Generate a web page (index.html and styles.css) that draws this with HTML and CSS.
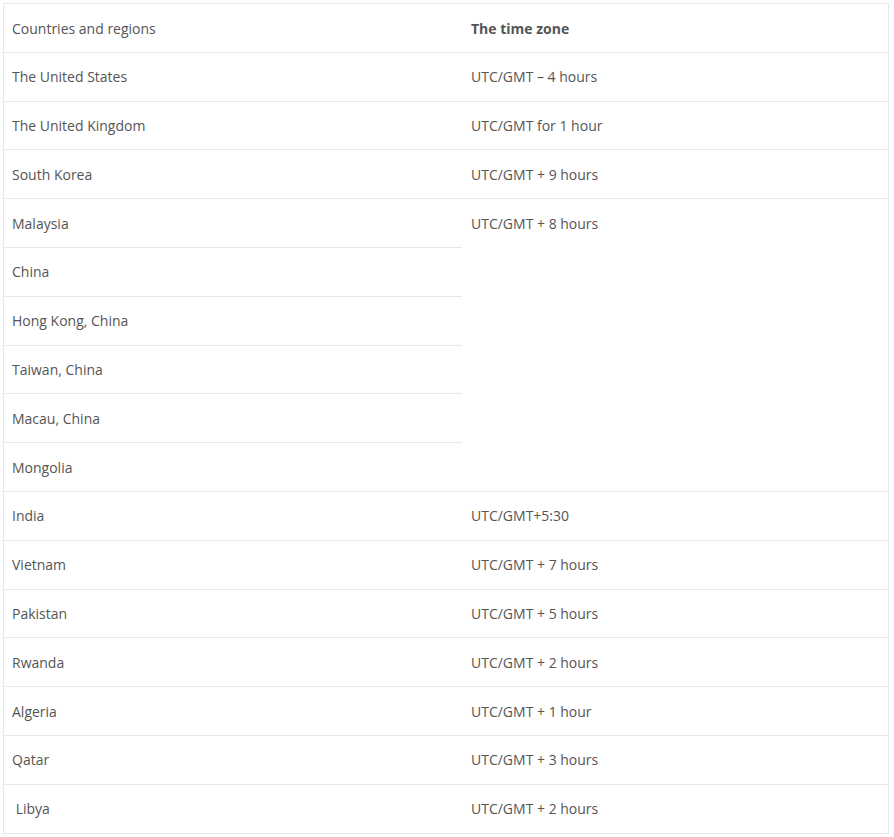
FILE: index.html
```html
<!DOCTYPE html>
<html>
<head>
<meta charset="utf-8">
<link rel="stylesheet" href="styles.css">
</head>
<body>
<table class="tz">
<tbody>
<tr><td class="c1">Countries and regions</td><td class="c2"><strong>The time zone</strong></td></tr>
<tr><td class="c1">The United States</td><td class="c2">UTC/GMT – 4 hours</td></tr>
<tr><td class="c1">The United Kingdom</td><td class="c2">UTC/GMT for 1 hour</td></tr>
<tr><td class="c1">South Korea</td><td class="c2">UTC/GMT + 9 hours</td></tr>
<tr><td class="c1">Malaysia</td><td class="c2 span" rowspan="6">UTC/GMT + 8 hours</td></tr>
<tr><td class="c1">China</td></tr>
<tr><td class="c1">Hong Kong, China</td></tr>
<tr><td class="c1">Taiwan, China</td></tr>
<tr><td class="c1">Macau, China</td></tr>
<tr><td class="c1">Mongolia</td></tr>
<tr><td class="c1">India</td><td class="c2">UTC/GMT+5:30</td></tr>
<tr><td class="c1">Vietnam</td><td class="c2">UTC/GMT + 7 hours</td></tr>
<tr><td class="c1">Pakistan</td><td class="c2">UTC/GMT + 5 hours</td></tr>
<tr><td class="c1">Rwanda</td><td class="c2">UTC/GMT + 2 hours</td></tr>
<tr><td class="c1">Algeria</td><td class="c2">UTC/GMT + 1 hour</td></tr>
<tr><td class="c1">Qatar</td><td class="c2">UTC/GMT + 3 hours</td></tr>
<tr><td class="c1">&nbsp;Libya</td><td class="c2">UTC/GMT + 2 hours</td></tr>
</tbody>
</table>
</body>
</html>
```

FILE: styles.css
```css
html, body {
  background: #fff;
}
body {
  margin: 3px;
  font-family: "Open Sans", "Liberation Sans", sans-serif;
  font-size: 14px;
  color: #555;
}
.tz {
  border-collapse: collapse;
  width: 886px;
  border: 1px solid #e8e8e8;
}
.tz td {
  border-top: 1px solid #e8e8e8;
  border-bottom: 1px solid #e8e8e8;
  padding: 15.5px 8px 14.5px;
  line-height: 17.8px;
  text-align: left;
  vertical-align: middle;
}
.tz .c1 {
  width: 442px;
}
.tz .c2 {
  padding-left: 9px;
}
.tz .span {
  vertical-align: top;
}
.tz strong {
  font-weight: 700;
}
```
